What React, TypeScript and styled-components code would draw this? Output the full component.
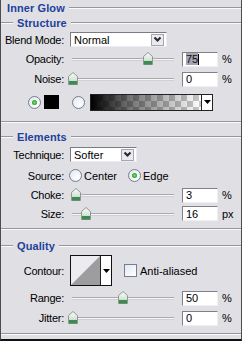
import styled, { createGlobalStyle } from 'styled-components';

const GlobalStyle = createGlobalStyle`
  html, body {
    margin: 0;
    background: #dfdfe4;
  }
`;

interface SliderRowProps {
  label: string;
  value: string;
  unit: string;
  pos: number;
  h: number;
  selected?: boolean;
}

const SliderRow = ({ label, value, unit, pos, h, selected }: SliderRowProps) => (
  <Row $h={h}>
    <Label>{label}</Label>
    <Control>
      <Track>
        <TrackLine />
        <Thumb style={{ left: `${pos - 2}px` }} width="10" height="13" viewBox="0 0 10 13">
          <defs>
            <linearGradient id="thumbFill" x1="0" y1="0" x2="0" y2="1">
              <stop offset="0" stopColor="#fbfcfb" />
              <stop offset="0.6" stopColor="#d7e4d9" />
              <stop offset="1" stopColor="#b6ccb9" />
            </linearGradient>
          </defs>
          <path d="M0.5 12.5 V4.5 L5 0.5 L9.5 4.5 V12.5 Z" fill="url(#thumbFill)" stroke="#8d9a90" />
          <rect x="1" y="9" width="8" height="3.5" fill="#3d8a52" />
        </Thumb>
      </Track>
      <NumberBox>
        {selected ? (
          <>
            <Selected>{value}</Selected>
            <Caret />
          </>
        ) : (
          value
        )}
      </NumberBox>
      <Unit>{unit}</Unit>
    </Control>
  </Row>
);

const Chevron = () => (
  <svg width="9" height="7" viewBox="0 0 9 7">
    <path d="M1.5 1.5 L4.5 4.5 L7.5 1.5" fill="none" stroke="#2b2b33" strokeWidth="2.2" />
  </svg>
);

const DownTri = () => (
  <svg width="7" height="4" viewBox="0 0 7 4">
    <path d="M0 0 H7 L3.5 4 Z" fill="#000" />
  </svg>
);

export default function App() {
  return (
    <>
      <GlobalStyle />
      <Panel>
        <Heading $h={15} $pad={6}>
          <HeadText>Inner Glow</HeadText>
          <Rule />
        </Heading>

        <Heading $h={15}>
          <Rule $w={12} />
          <HeadText>Structure</HeadText>
          <Rule />
        </Heading>
        <Row $h={19}>
          <Label>Blend Mode:</Label>
          <Select $w={97}>
            <SelectText>Normal</SelectText>
            <DropButton>
              <Chevron />
            </DropButton>
          </Select>
        </Row>
        <SliderRow label="Opacity:" value="75" unit="%" pos={75} h={20} selected />
        <SliderRow label="Noise:" value="0" unit="%" pos={0} h={20} />
        <ColorRow>
          <Radio $on />
          <Swatch />
          <Radio />
          <GradientPicker>
            <GradientFill />
            <PickerArrow>
              <DownTri />
            </PickerArrow>
          </GradientPicker>
        </ColorRow>

        <Separator $top={6} />

        <Heading $h={14} $top={7}>
          <Rule $w={12} />
          <HeadText>Elements</HeadText>
          <Rule />
        </Heading>
        <Row $h={21}>
          <Label>Technique:</Label>
          <Select $w={67}>
            <SelectText>Softer</SelectText>
            <DropButton>
              <Chevron />
            </DropButton>
          </Select>
        </Row>
        <Row $h={21}>
          <Label>Source:</Label>
          <Control>
            <RadioLabel>
              <Radio />
              Center
            </RadioLabel>
            <RadioLabel $gap={8}>
              <Radio $on />
              Edge
            </RadioLabel>
          </Control>
        </Row>
        <SliderRow label="Choke:" value="3" unit="%" pos={3} h={18} />
        <SliderRow label="Size:" value="16" unit="px" pos={13} h={19} />

        <Separator $top={5} />

        <Heading $h={14} $top={9}>
          <Rule $w={12} />
          <HeadText>Quality</HeadText>
          <Rule />
        </Heading>
        <Row $h={35}>
          <Label>Contour:</Label>
          <Control>
            <ContourBox>
              <ContourPreview viewBox="0 0 30 29" preserveAspectRatio="none">
                <rect width="30" height="29" fill="#ececf0" />
                <path d="M0 29 L30 0 V29 Z" fill="#9d9da0" />
              </ContourPreview>
              <PickerArrow>
                <DownTri />
              </PickerArrow>
            </ContourBox>
            <CheckLabel>
              <CheckBox />
              Anti-aliased
            </CheckLabel>
          </Control>
        </Row>
        <SliderRow label="Range:" value="50" unit="%" pos={50} h={20} />
        <SliderRow label="Jitter:" value="0" unit="%" pos={0} h={20} />

        <Separator $top={5} />
      </Panel>
    </>
  );
}

const Panel = styled.div`
  width: 242px;
  height: 341px;
  box-sizing: border-box;
  background: #dfdfe4;
  border-left: 1px solid #4c4c52;
  border-right: 1px solid #4c4c52;
  border-bottom: 2px solid #111;
  font-family: 'Liberation Sans', Arial, sans-serif;
  font-size: 11px;
  color: #000;
  display: flex;
  flex-direction: column;
`;

const Heading = styled.div<{ $h: number; $pad?: number; $top?: number }>`
  display: flex;
  align-items: center;
  gap: 4px;
  height: ${(p) => p.$h}px;
  padding-left: ${(p) => p.$pad || 0}px;
  margin-top: ${(p) => p.$top || 0}px;
  flex: none;
`;

const Rule = styled.span<{ $w?: number }>`
  height: 0;
  border-top: 1px solid #96969c;
  border-bottom: 1px solid #fafafc;
  ${(p) => (p.$w ? `width: ${p.$w}px; flex: none;` : 'flex: 1;')}
`;

const HeadText = styled.span`
  font-weight: bold;
  color: #1e3f9b;
  letter-spacing: 0.1px;
`;

const Separator = styled.div<{ $top: number }>`
  flex: none;
  margin-top: ${(p) => p.$top}px;
  border-top: 1px solid #96969c;
  border-bottom: 1px solid #fafafc;
`;

const Row = styled.div<{ $h: number }>`
  display: grid;
  grid-template-columns: 63px auto;
  column-gap: 6px;
  align-items: center;
  height: ${(p) => p.$h}px;
  flex: none;
`;

const Label = styled.span`
  text-align: right;
  white-space: nowrap;
  letter-spacing: -0.25px;
`;

const Control = styled.div`
  display: flex;
  align-items: center;
`;

const Select = styled.div<{ $w: number }>`
  width: ${(p) => p.$w}px;
  height: 15px;
  box-sizing: border-box;
  background: #fff;
  border: 1px solid;
  border-color: #7b7b84 #ececf0 #ececf0 #7b7b84;
  display: flex;
  align-items: center;
  padding-left: 3px;
`;

const SelectText = styled.span`
  flex: 1;
`;

const DropButton = styled.span`
  width: 13px;
  height: 12px;
  box-sizing: border-box;
  margin-right: 2px;
  background: #ebeaf0;
  border: 1px solid #a7a7b2;
  display: flex;
  align-items: center;
  justify-content: center;
`;

const Track = styled.div`
  position: relative;
  width: 106px;
  height: 14px;
  margin-right: 6px;
`;

const TrackLine = styled.div`
  position: absolute;
  left: 2px;
  right: 2px;
  top: 6px;
  height: 1px;
  background: #f6f6f6;
  border-top: 1px solid #a9a9ae;
  border-bottom: 1px solid #cfcfd4;
`;

const Thumb = styled.svg`
  position: absolute;
  top: 0;
`;

const NumberBox = styled.div`
  width: 36px;
  height: 15px;
  box-sizing: border-box;
  background: #fff;
  border: 1px solid;
  border-color: #80808a #f0f0f2 #f0f0f2 #80808a;
  padding-left: 3px;
  display: flex;
  align-items: center;
`;

const Selected = styled.span`
  background: #a4a4b2;
  color: #111;
`;

const Caret = styled.span`
  width: 1px;
  height: 11px;
  background: #000;
`;

const Unit = styled.span`
  margin-left: 4px;
`;

const ColorRow = styled.div`
  display: flex;
  align-items: center;
  height: 26px;
  padding-left: 27px;
  flex: none;
`;

const Radio = styled.span<{ $on?: boolean }>`
  width: 11px;
  height: 11px;
  border-radius: 50%;
  border: 1px solid #6f7f97;
  background: radial-gradient(circle at 65% 65%, #ffffff 0%, #e6e9ef 80%);
  display: inline-flex;
  align-items: center;
  justify-content: center;
  flex: none;
  &::after {
    content: '';
    width: 5px;
    height: 5px;
    border-radius: 50%;
    background: ${(p) => (p.$on ? 'radial-gradient(circle, #7fe07f 0%, #22a022 70%)' : 'transparent')};
  }
`;

const Swatch = styled.span`
  width: 15px;
  height: 14px;
  margin: 0 13px 0 3px;
  background: #000;
`;

const GradientPicker = styled.div`
  display: flex;
  width: 123px;
  height: 17px;
  box-sizing: border-box;
  margin-left: 5px;
  border: 1px solid #222;
  background: #fff;
`;

const GradientFill = styled.div`
  flex: 1;
  background:
    linear-gradient(to right, #000 0%, rgba(0, 0, 0, 0.55) 35%, rgba(0, 0, 0, 0) 100%),
    repeating-conic-gradient(#c8c8c8 0% 25%, #ffffff 0% 50%) 0 0 / 12px 12px;
`;

const PickerArrow = styled.div`
  width: 10px;
  border-left: 1px solid #222;
  background: #fff;
  display: flex;
  align-items: center;
  justify-content: center;
  flex: none;
`;

const RadioLabel = styled.span<{ $gap?: number }>`
  display: inline-flex;
  align-items: center;
  gap: 2px;
  margin-left: ${(p) => (p.$gap ? `${p.$gap + 3}px` : '-1px')};
`;

const ContourBox = styled.div`
  display: flex;
  width: 42px;
  height: 31px;
  box-sizing: border-box;
  border: 1px solid #111;
  background: #fff;
`;

const ContourPreview = styled.svg`
  width: 30px;
  height: 29px;
  display: block;
`;

const CheckLabel = styled.span`
  display: inline-flex;
  align-items: center;
  gap: 3px;
  margin-left: 12px;
`;

const CheckBox = styled.span`
  width: 11px;
  height: 11px;
  border: 1px solid #6f7f97;
  background: linear-gradient(135deg, #e4e7ee, #ffffff);
`;
